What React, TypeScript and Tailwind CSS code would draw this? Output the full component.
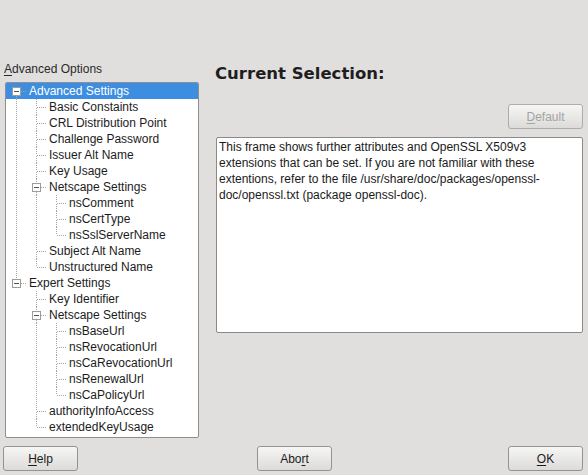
import type { ReactNode } from 'react'

// [level, label]
const ITEMS: [number, string][] = [
  [0, 'Advanced Settings'],
  [1, 'Basic Constaints'],
  [1, 'CRL Distribution Point'],
  [1, 'Challenge Password'],
  [1, 'Issuer Alt Name'],
  [1, 'Key Usage'],
  [1, 'Netscape Settings'],
  [2, 'nsComment'],
  [2, 'nsCertType'],
  [2, 'nsSslServerName'],
  [1, 'Subject Alt Name'],
  [1, 'Unstructured Name'],
  [0, 'Expert Settings'],
  [1, 'Key Identifier'],
  [1, 'Netscape Settings'],
  [2, 'nsBaseUrl'],
  [2, 'nsRevocationUrl'],
  [2, 'nsCaRevocationUrl'],
  [2, 'nsRenewalUrl'],
  [2, 'nsCaPolicyUrl'],
  [1, 'authorityInfoAccess'],
  [1, 'extendedKeyUsage'],
]

interface Row {
  level: number
  label: string
  first: boolean
  last: boolean
  hasKids: boolean
  guides: boolean[]
}

function buildRows(): Row[] {
  const cont: boolean[] = []
  return ITEMS.map(([level, label], i) => {
    let last = true
    for (let j = i + 1; j < ITEMS.length; j++) {
      const l = ITEMS[j][0]
      if (l < level) break
      if (l === level) {
        last = false
        break
      }
    }
    const hasKids = ITEMS[i + 1]?.[0] === level + 1
    const guides = cont.slice(0, level)
    cont[level] = !last
    return { level, label, first: i === 0, last, hasKids, guides }
  })
}

const LINE = '#a3a3a3'

// one indentation column of the tree guide lines
function Guide({ row, own, on }: { row: Row; own: boolean; on?: boolean }) {
  if (!own) {
    return (
      <svg width={20} height={16} className="shrink-0 block">
        {on && <line x1={10.5} y1={0} x2={10.5} y2={16} stroke={LINE} strokeDasharray="1 1" />}
      </svg>
    )
  }
  const up = !(row.first && row.level === 0)
  const down = !row.last
  return (
    <svg width={23} height={16} className="shrink-0 block" shapeRendering="crispEdges">
      {up && <line x1={10.5} y1={0} x2={10.5} y2={8} stroke={LINE} strokeDasharray="1 1" />}
      {down && <line x1={10.5} y1={9} x2={10.5} y2={16} stroke={LINE} strokeDasharray="1 1" />}
      <line x1={row.hasKids ? 15 : 11} y1={8.5} x2={21} y2={8.5} stroke={LINE} strokeDasharray="1 1" />
      {row.hasKids && (
        <>
          <rect x={6.5} y={4.5} width={8} height={8} fill="#ffffff" stroke="#9c9c9c" />
          <line x1={8} y1={8.5} x2={13} y2={8.5} stroke="#505050" />
        </>
      )}
    </svg>
  )
}

function TreeRow({ row, selected }: { row: Row; selected?: boolean }) {
  return (
    <div className={`flex h-4 items-center ${selected ? 'bg-[#3d8ee0] text-white' : 'text-[#1c1c1c]'}`}>
      {row.guides.map((g, i) => (
        <Guide key={i} row={row} own={false} on={g} />
      ))}
      <Guide row={row} own />
      <span className="whitespace-nowrap leading-4">{row.label}</span>
    </div>
  )
}

function Button({ children, disabled, className = '' }: { children: ReactNode; disabled?: boolean; className?: string }) {
  return (
    <button
      className={`h-[25px] w-[75px] rounded-[3px] border text-[12px] bg-gradient-to-b from-[#f6f6f5] to-[#dcdbda] ${
        disabled ? 'border-[#acacac] text-[#a4a4a4]' : 'border-[#939393] text-[#1c1c1c]'
      } ${className}`}
    >
      {children}
    </button>
  )
}

export default function App() {
  const rows = buildRows()

  return (
    <div
      className="w-[588px] h-[475px] bg-[#e0dfde] flex flex-col text-[12px] overflow-hidden"
      style={{ fontFamily: '"Liberation Sans", Arial, sans-serif' }}
    >
      <div className="flex flex-1">
        {/* Left: options tree */}
        <div className="w-[194px] ml-[5px] pt-[61px] flex flex-col">
          <div className="h-4 leading-4 text-[#2a2a2a] -ml-[1px]">
            <span className="underline underline-offset-2">A</span>dvanced Options
          </div>
          <div className="mt-[5px] h-[356px] bg-white border border-[#8e8e8e] rounded-[2px] overflow-hidden">
            {rows.map((r, i) => (
              <TreeRow key={i} row={r} selected={i === 0} />
            ))}
          </div>
        </div>

        {/* Right: current selection */}
        <div className="ml-[17px] mr-[5px] flex-1 flex flex-col">
          <h1
            className="mt-[64px] h-5 leading-5 text-[16.5px] font-bold text-[#1e1e1e] -ml-[1px]"
            style={{ fontFamily: '"DejaVu Sans", sans-serif' }}
          >
            Current Selection:
          </h1>
          <div className="flex justify-end mt-[20px]">
            <Button disabled className="w-[74px]">
              <span className="underline underline-offset-2">D</span>efault
            </Button>
          </div>
          <div className="mt-[8px] h-[196px] bg-white border border-[#8a8a8a] rounded-[2px] px-[2px] pt-[1px] text-[#1a1a1a] leading-4">
            This frame shows further attributes and OpenSSL X509v3 extensions that can be set. If you are not familiar with
            these extentions, refer to the file /usr/share/doc/packages/openssl-doc/openssl.txt (package openssl-doc).
          </div>
        </div>
      </div>

      {/* Bottom buttons */}
      <div className="flex items-center justify-between pl-[3px] pr-[5px] pb-[4px]">
        <Button>
          <span className="underline underline-offset-2">H</span>elp
        </Button>
        <Button className="ml-[3px]">
          Abo<span className="underline underline-offset-2">r</span>t
        </Button>
        <Button className="w-[74px]">
          <span className="underline underline-offset-2">O</span>K
        </Button>
      </div>
    </div>
  )
}
